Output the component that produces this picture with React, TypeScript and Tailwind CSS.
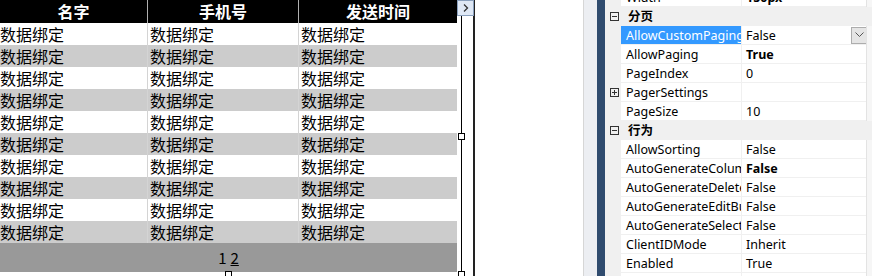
import React from 'react'

const cjk = { fontFamily: '"Noto Sans CJK SC", "Noto Sans", sans-serif' }
const ui = { fontFamily: '"Noto Sans", "Noto Sans CJK SC", sans-serif' }

type Prop = { name: string; value?: string; bold?: boolean; selected?: boolean; expand?: boolean }
type Row = { cat: string } | Prop

const rows: Row[] = [
  { cat: '分页' },
  { name: 'AllowCustomPaging', value: 'False', selected: true },
  { name: 'AllowPaging', value: 'True', bold: true },
  { name: 'PageIndex', value: '0' },
  { name: 'PagerSettings', value: '', expand: true },
  { name: 'PageSize', value: '10' },
  { cat: '行为' },
  { name: 'AllowSorting', value: 'False' },
  { name: 'AutoGenerateColumns', value: 'False', bold: true },
  { name: 'AutoGenerateDeleteButton', value: 'False' },
  { name: 'AutoGenerateEditButton', value: 'False' },
  { name: 'AutoGenerateSelectButton', value: 'False' },
  { name: 'ClientIDMode', value: 'Inherit' },
  { name: 'Enabled', value: 'True' },
  { name: 'EnableSortingAndPagingCallbacks', value: 'False' },
]

function BoxIcon({ plus }: { plus?: boolean }) {
  return (
    <svg width="9" height="9" viewBox="0 0 9 9">
      <rect x="0.5" y="0.5" width="8" height="8" fill="none" stroke="#333" />
      <path d="M2 4.5h5" stroke="#333" />
      {plus && <path d="M4.5 2v5" stroke="#333" />}
    </svg>
  )
}

function Handle() {
  return <div className="h-[7px] w-[7px] border border-black bg-white" />
}

function DataTable() {
  const data = Array.from({ length: 10 })
  return (
    <div className="flex w-[457px] flex-col text-[16px] text-black" style={cjk}>
      <div className="flex h-[23px] items-center bg-black font-bold leading-[23px] text-white">
        <div className="w-[148px] border-r border-[#b0b0b0] text-center">名字</div>
        <div className="w-[151px] border-r border-[#b0b0b0] text-center">手机号</div>
        <div className="flex-1 text-center">发送时间</div>
      </div>
      {data.map((_, i) => (
        <div key={i} className={`flex h-[22px] leading-[22px] ${i % 2 === 0 ? 'bg-white' : 'bg-[#cccccc]'}`}>
          <div className="w-[148px] border-r border-[#d4d4d4]">数据绑定</div>
          <div className="w-[151px] border-r border-[#d4d4d4] pl-[2px]">数据绑定</div>
          <div className="flex-1 pl-[2px]">数据绑定</div>
        </div>
      ))}
      <div className="flex h-[29px] items-center justify-center bg-[#999999] text-[15px] leading-none">
        <span>1</span>
        <span className="ml-[4px] underline">2</span>
      </div>
    </div>
  )
}

function PropertyGrid() {
  return (
    <div className="flex h-full flex-1 flex-col overflow-hidden text-[12.5px] text-black" style={ui}>
      <div className="-mt-[12px] flex flex-col">
        <div className="flex h-[19px]">
          <div className="w-[16px] bg-[#f0f0f0]" />
          <div className="w-[121px] border-b border-r border-[#f0f0f0] pl-[5px] leading-[19px]">Width</div>
          <div className="w-[124px] border-b border-[#f0f0f0] pl-[4px] font-bold leading-[19px]">150px</div>
          <div className="flex-1 border-l border-[#e3e3e3] bg-[#f6f6f6]" />
        </div>
        {rows.map((r, i) =>
          'cat' in r ? (
            <div key={i} className="flex h-[19px] items-center bg-[#f0f0f0]">
              <div className="flex w-[16px] justify-center pl-[2px]">
                <BoxIcon />
              </div>
              <div className="pl-[7px] font-bold" style={cjk}>{r.cat}</div>
            </div>
          ) : (
            <div key={i} className="flex h-[19px]">
              <div className="flex w-[16px] items-center justify-center bg-[#f0f0f0] pl-[2px]">
                {r.expand && <BoxIcon plus />}
              </div>
              <div
                className={`w-[121px] overflow-hidden whitespace-nowrap border-b border-r border-[#f0f0f0] pl-[5px] leading-[19px] ${
                  r.selected ? 'bg-[#3399ff] text-white' : ''
                }`}
              >
                {r.name}
              </div>
              <div className="flex w-[124px] items-center justify-between border-b border-[#f0f0f0] pl-[4px] leading-[19px]">
                <span className={r.bold ? 'font-bold' : ''}>{r.value}</span>
                {r.selected && (
                  <div className="mr-[-2px] flex h-[17px] w-[17px] items-center justify-center border border-[#adadad] bg-[#e5e5e5]">
                    <svg width="9" height="6" viewBox="0 0 9 6">
                      <path d="M0.5 0.5l4 4 4-4" fill="none" stroke="#555" />
                    </svg>
                  </div>
                )}
              </div>
              <div className="flex-1 border-l border-[#e3e3e3] bg-[#f6f6f6]" />
            </div>
          )
        )}
      </div>
    </div>
  )
}

export default function App() {
  return (
    <div className="flex h-[276px] w-[872px] overflow-hidden bg-white">
      {/* designer surface */}
      <div className="relative flex h-full w-[583px]">
        <DataTable />
        <div className="w-[4px]" />
        <div className="h-full w-[1px] bg-black" />
        <div className="w-[11px]" />
        <div className="h-full w-[2px] bg-[#222]" />
        <div className="absolute left-[457px] top-0 flex h-[16px] w-[17px] items-center justify-center border border-[#8aa0bd] bg-[#dfe8f5]">
          <svg width="6" height="8" viewBox="0 0 6 8">
            <path d="M1 0.5l3.5 3.5L1 7.5" fill="none" stroke="#333" strokeWidth="1.3" />
          </svg>
        </div>
        <div className="absolute left-[458px] top-[133px]"><Handle /></div>
        <div className="absolute left-[225px] top-[271px]"><Handle /></div>
        <div className="absolute left-[458px] top-[271px]"><Handle /></div>
      </div>
      {/* properties panel */}
      <div className="flex h-full flex-1 border-l border-[#d6d6d6]">
        <div className="w-[13px] bg-[#eceef2]" />
        <div className="w-[8px] bg-[#2f4b6e]" />
        <PropertyGrid />
      </div>
    </div>
  )
}
